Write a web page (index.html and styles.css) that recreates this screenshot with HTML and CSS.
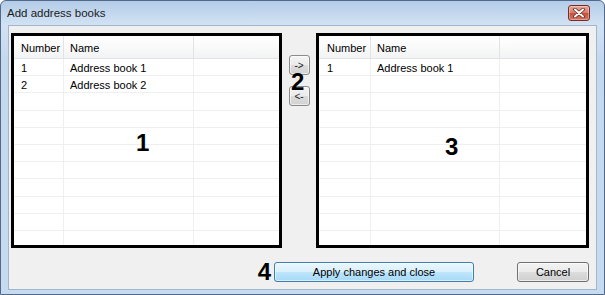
FILE: index.html
```html
<!DOCTYPE html>
<html lang="en">

<head>
    <meta charset="UTF-8">
    <meta name="viewport" content="width=device-width, initial-scale=1.0">
    <title>Add address books</title>
    <link rel="stylesheet" href="styles.css">
</head>

<body>
    <div class="window">
        <div class="titlebar">
            <span class="title">Add address books</span>
            <button class="close">
                <svg width="12" height="10" viewBox="0 0 12 10">
                    <path d="M2 1.5 L10 8.5 M10 1.5 L2 8.5" stroke="#6b2a22" stroke-width="3.6" stroke-linecap="round" />
                    <path d="M2 1.5 L10 8.5 M10 1.5 L2 8.5" stroke="#ffffff" stroke-width="2" stroke-linecap="round" />
                </svg>
            </button>
        </div>
        <div class="client">
            <div class="main">
                <div class="list list-left">
                    <div class="row head"><div class="c1">Number</div><div class="c2">Name</div><div class="c3"></div></div>
                    <div class="row"><div class="c1">1</div><div class="c2">Address book 1</div><div class="c3"></div></div>
                    <div class="row"><div class="c1">2</div><div class="c2">Address book 2</div><div class="c3"></div></div>
                    <div class="row"><div class="c1"></div><div class="c2"></div><div class="c3"></div></div>
                    <div class="row"><div class="c1"></div><div class="c2"></div><div class="c3"></div></div>
                    <div class="row"><div class="c1"></div><div class="c2"></div><div class="c3"></div></div>
                    <div class="row"><div class="c1"></div><div class="c2"></div><div class="c3"></div></div>
                    <div class="row"><div class="c1"></div><div class="c2"></div><div class="c3"></div></div>
                    <div class="row"><div class="c1"></div><div class="c2"></div><div class="c3"></div></div>
                    <div class="row"><div class="c1"></div><div class="c2"></div><div class="c3"></div></div>
                    <div class="row"><div class="c1"></div><div class="c2"></div><div class="c3"></div></div>
                    <div class="row"><div class="c1"></div><div class="c2"></div><div class="c3"></div></div>
                    <span class="mark mark-1">1</span>
                </div>
                <div class="mover">
                    <button class="small-btn">-&gt;</button>
                    <button class="small-btn">&lt;-</button>
                    <span class="mark mark-2">2</span>
                </div>
                <div class="list list-right">
                    <div class="row head"><div class="c1">Number</div><div class="c2">Name</div><div class="c3"></div></div>
                    <div class="row"><div class="c1">1</div><div class="c2">Address book 1</div><div class="c3"></div></div>
                    <div class="row"><div class="c1"></div><div class="c2"></div><div class="c3"></div></div>
                    <div class="row"><div class="c1"></div><div class="c2"></div><div class="c3"></div></div>
                    <div class="row"><div class="c1"></div><div class="c2"></div><div class="c3"></div></div>
                    <div class="row"><div class="c1"></div><div class="c2"></div><div class="c3"></div></div>
                    <div class="row"><div class="c1"></div><div class="c2"></div><div class="c3"></div></div>
                    <div class="row"><div class="c1"></div><div class="c2"></div><div class="c3"></div></div>
                    <div class="row"><div class="c1"></div><div class="c2"></div><div class="c3"></div></div>
                    <div class="row"><div class="c1"></div><div class="c2"></div><div class="c3"></div></div>
                    <div class="row"><div class="c1"></div><div class="c2"></div><div class="c3"></div></div>
                    <div class="row"><div class="c1"></div><div class="c2"></div><div class="c3"></div></div>
                    <span class="mark mark-3">3</span>
                </div>
            </div>
            <div class="footer">
                <span class="mark-4">4</span>
                <button class="btn btn-default">Apply changes and close</button>
                <button class="btn btn-cancel">Cancel</button>
            </div>
        </div>
    </div>
</body>

</html>
```

FILE: styles.css
```css
* {
    margin: 0;
    padding: 0;
    box-sizing: border-box;
}

body {
    width: 605px;
    height: 295px;
    overflow: hidden;
    font-family: "Liberation Sans", Arial, sans-serif;
    font-size: 11px;
    color: #000;
}

.window {
    width: 605px;
    height: 295px;
    border: 1px solid #52698a;
    border-radius: 6px 6px 0 0;
    background: linear-gradient(#b3cce8, #d2e2f3 24px, #c4d8ee 60px, #c6daf0);
    display: flex;
    flex-direction: column;
}

.titlebar {
    height: 24px;
    display: flex;
    align-items: center;
    justify-content: space-between;
    padding: 0 14px 0 6px;
}

.title {
    font-size: 11.5px;
    color: #1a1a1a;
}

.close {
    width: 22px;
    height: 16px;
    border: 1px solid #7a2a22;
    border-radius: 3px;
    background: linear-gradient(#e9a699, #d77b6b 50%, #c4503d 51%, #d5725c);
    box-shadow: inset 0 0 0 1px rgba(255, 255, 255, 0.35);
    display: flex;
    align-items: center;
    justify-content: center;
}

.client {
    flex: 1;
    margin: 0 7px 4px;
    background-color: #f0f0f0;
    border: 1px solid #a0b6cf;
    padding: 7px 7px 0 2px;
}

.main {
    height: 215px;
    display: flex;
}

.list {
    position: relative;
    background-color: #fff;
    border: 3px solid #000;
    overflow: hidden;
}

.list-left {
    width: 271px;
}

.list-right {
    flex: 1;
}

.row {
    height: 17.2px;
    display: flex;
    border-bottom: 1px solid #efefef;
}

.row>div {
    padding-top: 3px;
    white-space: nowrap;
}

.row.head {
    height: 23px;
    align-items: stretch;
    background: linear-gradient(#ffffff, #fafafa 50%, #f2f3f4);
    border-bottom: 1px solid #e2e3e5;
}

.row.head>div {
    padding-top: 2px;
    display: flex;
    align-items: center;
}

.c1 {
    width: 50px;
    padding-left: 7px;
    border-right: 1px solid #efefef;
}

.c2 {
    width: 130px;
    padding-left: 6px;
    border-right: 1px solid #efefef;
}

.c3 {
    flex: 1;
}

.head .c1,
.head .c2 {
    border-right: 1px solid #e2e3e5;
}

.list-right .c1 {
    width: 52px;
    padding-left: 8px;
}

.list-right .c2 {
    width: 129px;
}

.mover {
    position: relative;
    width: 34px;
    padding-top: 22px;
    display: flex;
    flex-direction: column;
    align-items: center;
    gap: 11px;
}

.small-btn {
    width: 21px;
    height: 20px;
    font-family: "Liberation Sans", Arial, sans-serif;
    font-size: 10px;
    color: #222;
    border: 1px solid #8a8a8a;
    border-radius: 3px;
    background: linear-gradient(#f4f4f4, #ebebeb 50%, #dcdcdc 51%, #d2d2d2);
    box-shadow: inset 0 0 0 1px rgba(255, 255, 255, 0.6);
}

.mark {
    position: absolute;
    font-size: 24px;
    font-weight: bold;
    line-height: 1;
}

.mark-1 {
    left: 122px;
    top: 95px;
}

.mark-2 {
    left: 9px;
    top: 37px;
}

.mark-3 {
    left: 126px;
    top: 99px;
}

.footer {
    margin-top: 14px;
    height: 20px;
    display: flex;
    align-items: center;
    justify-content: flex-end;
}

.mark-4 {
    font-size: 24px;
    font-weight: bold;
    line-height: 1;
    margin-right: 3px;
}

.btn {
    height: 20px;
    font-family: "Liberation Sans", Arial, sans-serif;
    font-size: 11px;
    color: #000;
    border-radius: 3px;
}

.btn-default {
    width: 200px;
    margin-right: 43px;
    border: 1px solid #3c7fb1;
    background: linear-gradient(#eaf6fd, #d9f0fc 50%, #bee6fd 51%, #a7d9f5);
    box-shadow: inset 0 0 0 1px rgba(255, 255, 255, 0.55);
}

.btn-cancel {
    width: 72px;
    border: 1px solid #707070;
    background: linear-gradient(#f2f2f2, #ebebeb 50%, #dddddd 51%, #cfcfcf);
    box-shadow: inset 0 0 0 1px rgba(255, 255, 255, 0.6);
}
```
